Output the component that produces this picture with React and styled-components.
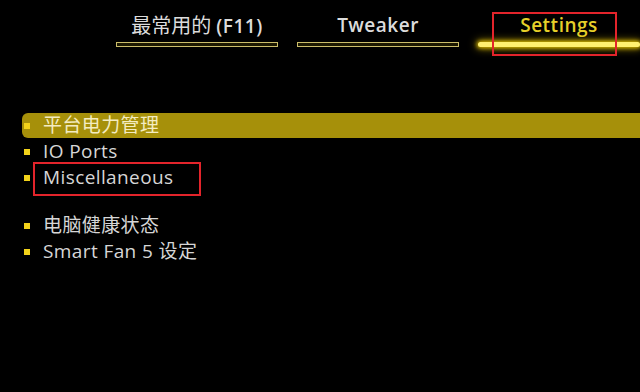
import styled, { createGlobalStyle } from "styled-components";

const GlobalStyle = createGlobalStyle`
  html, body {
    margin: 0;
    padding: 0;
    background: #000;
  }
  body {
    width: 640px;
    height: 392px;
    overflow: hidden;
    font-family: "Open Sans", "Noto Sans CJK SC", sans-serif;
  }
`;

const tabs = [
  { label: "最常用的", key: "(F11)" },
  { label: "Tweaker" },
  { label: "Settings", active: true },
];

const groups = [
  [
    { label: "平台电力管理", selected: true },
    { label: "IO Ports" },
    { label: "Miscellaneous", marked: true },
  ],
  [{ label: "电脑健康状态" }, { label: "Smart Fan 5 设定" }],
];

const Screen = styled.div`
  width: 640px;
  height: 392px;
  background: #000;
  display: flex;
  flex-direction: column;
`;

const TabBar = styled.div`
  display: flex;
  gap: 19px;
  padding: 12px 0 0 116px;
`;

const Tab = styled.div`
  position: relative;
  width: 162px;
  display: flex;
  flex-direction: column;
  align-items: center;
  gap: 5px;

  ${(p) =>
    p.$active &&
    `
    &::after {
      content: "";
      position: absolute;
      left: 14px;
      top: 0;
      width: 121px;
      height: 40px;
      border: 2px solid #e3242b;
    }
  `}
`;

const TabLabel = styled.div`
  height: 25px;
  line-height: 27px;
  font-size: 19px;
  font-weight: 600;
  letter-spacing: 0.5px;
  color: ${(p) => (p.$active ? "#e6d02a" : "#dcdcdc")};
  white-space: nowrap;
`;

const TabCjk = styled.span`
  font-weight: 400;
  font-size: 20px;
  letter-spacing: 0;
  margin-right: 5px;
`;

const TabLine = styled.div`
  width: 100%;
  height: 5px;
  box-sizing: border-box;
  ${(p) =>
    p.$active
      ? `
    background: #fff070;
    border-radius: 3px;
    box-shadow: 0 0 4px 1px #e6c400, 0 0 8px 2px rgba(200, 170, 0, 0.6);
  `
      : `
    background: #1c1800;
    border: 1px solid #cbbd6a;
  `}
`;

const Menu = styled.div`
  display: flex;
  flex-direction: column;
  gap: 23px;
  padding: 66px 0 0 22px;
`;

const Group = styled.div`
  display: flex;
  flex-direction: column;
  gap: 1px;
`;

const Item = styled.div`
  position: relative;
  height: 25px;
  display: flex;
  align-items: center;
  gap: 13px;
  padding-left: 2px;
  border-radius: 6px 0 0 6px;
  background: ${(p) => (p.$selected ? "#a6900a" : "transparent")};

  ${(p) =>
    p.$marked &&
    `
    &::after {
      content: "";
      position: absolute;
      left: 11px;
      top: -3px;
      width: 164px;
      height: 30px;
      border: 2px solid #e3242b;
    }
  `}
`;

const Bullet = styled.span`
  width: 6px;
  height: 6px;
  background: #f2d21a;
  flex: none;
`;

const ItemLabel = styled.span`
  font-size: 19px;
  letter-spacing: 0.4px;
  line-height: 25px;
  color: ${(p) => (p.$selected ? "#f4ecc0" : "#d6d6d6")};
  white-space: nowrap;
`;

export default function App() {
  return (
    <Screen>
      <GlobalStyle />
      <TabBar>
        {tabs.map((t) => (
          <Tab key={t.label} $active={t.active}>
            <TabLabel $active={t.active}>
              {t.key ? (
                <>
                  <TabCjk>{t.label}</TabCjk>
                  {t.key}
                </>
              ) : (
                t.label
              )}
            </TabLabel>
            <TabLine $active={t.active} />
          </Tab>
        ))}
      </TabBar>
      <Menu>
        {groups.map((g, i) => (
          <Group key={i}>
            {g.map((it) => (
              <Item key={it.label} $selected={it.selected} $marked={it.marked}>
                <Bullet />
                <ItemLabel $selected={it.selected}>{it.label}</ItemLabel>
              </Item>
            ))}
          </Group>
        ))}
      </Menu>
    </Screen>
  );
}
